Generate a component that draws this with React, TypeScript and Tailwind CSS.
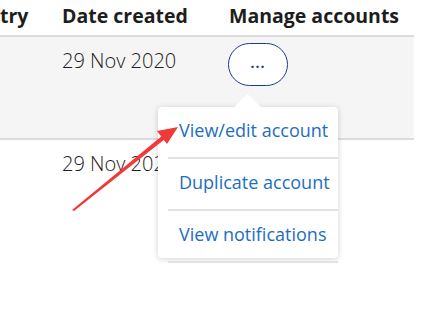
export default function App() {
  return (
    <div className="relative w-[446px] h-[322px] bg-white overflow-hidden font-['Open_Sans',sans-serif] text-[#1f2022]">
      <div className="w-[414px]">
        <div className="flex h-[37px] items-center pb-[4px] text-[19.5px] font-bold text-[#1d1d1d] border-b-2 border-[#dcdcdc]">
          <div className="w-[62px]">try</div>
          <div className="w-[167px]">Date created</div>
          <div>Manage accounts</div>
        </div>
        <div className="flex h-[103px] bg-[#f5f5f5] border-b-2 border-[#dcdcdc] text-[20px] leading-[28px] font-light">
          <div className="w-[62px]" />
          <div className="w-[166px] pt-[10px]">29 Nov 2020</div>
          <div className="pt-[6px]">
            <button className="w-[60px] h-[43px] rounded-[22px] border-[1.5px] border-[#1c3a8c] bg-white text-[#1c3a8c] font-bold text-[14px] leading-none pb-[4px] tracking-[1px]">
              ...
            </button>
          </div>
        </div>
        <div className="flex h-[60px] text-[20px] leading-[28px] font-light">
          <div className="w-[62px]" />
          <div className="w-[166px] pt-[10px]">29 Nov 2020</div>
        </div>
      </div>

      <div className="absolute left-[158px] top-[107px] w-[180px] h-[151px] bg-white rounded-[4px] shadow-[0_1px_6px_rgba(0,0,0,0.18)]">
        <div className="absolute left-[79px] -top-[9px] w-[21px] h-[21px] bg-white rotate-45" />
        <ul className="relative flex flex-col text-[18px] leading-[24px] text-[#1d6ec0]">
          {["View/edit account", "Duplicate account", "View notifications"].map((t) => (
            <li key={t} className="ml-[10px] h-[52px] border-b-2 border-[#e3e3e3] pl-[11px] pt-[11px] whitespace-nowrap">
              {t}
            </li>
          ))}
        </ul>
      </div>

      <svg className="absolute left-0 top-0" width="446" height="322">
        <polygon points="72,210 163,135 165,139 74,211" fill="#f03a3a" />
        <polygon points="178,127 157,131 167,144" fill="#f03a3a" />
      </svg>
    </div>
  );
}
